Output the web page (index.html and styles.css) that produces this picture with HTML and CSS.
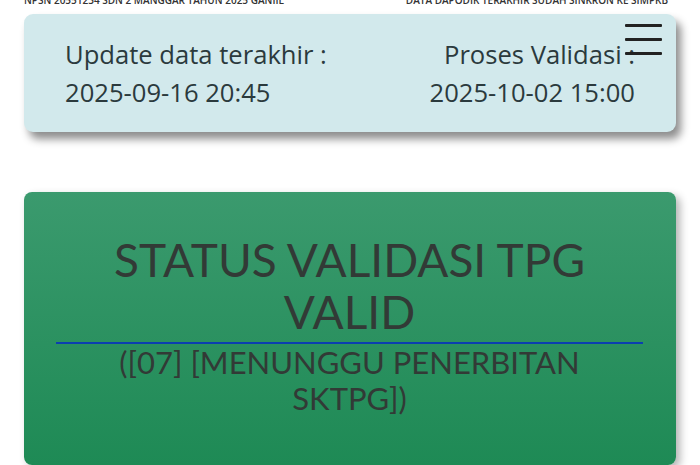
FILE: index.html
```html
<!DOCTYPE html>
<html>
<head>
<meta charset="utf-8">
<link rel="stylesheet" href="styles.css">
</head>
<body>
<div class="page">
  <div class="clip">
    <div class="clip-row">
      <span>NPSN 20551234 SDN 2 MANGGAR TAHUN 2025 GANJIL</span>
      <span>DATA DAPODIK TERAKHIR SUDAH SINKRON KE SIMPKB</span>
    </div>
  </div>
  <div class="info-card">
    <div class="info-col">
      <div>Update data terakhir :</div>
      <div>2025-09-16 20:45</div>
    </div>
    <div class="info-col right">
      <div>Proses Validasi :</div>
      <div>2025-10-02 15:00</div>
    </div>
    <div class="burger"><span></span><span></span><span></span></div>
  </div>
  <div class="status-card">
    <div class="status-title">STATUS VALIDASI TPG<br>VALID</div>
    <hr class="divider">
    <div class="status-sub">([07] [MENUNGGU PENERBITAN<br>SKTPG])</div>
  </div>
</div>
</body>
</html>
```

FILE: styles.css
```css
html, body {
  margin: 0;
  padding: 0;
  background: #ffffff;
}
body {
  width: 700px;
  height: 465px;
  overflow: hidden;
  font-family: "Open Sans", "Noto Sans", sans-serif;
}
.page {
  padding: 0 24px;
}
.clip {
  height: 4px;
  overflow: hidden;
  display: flex;
  align-items: flex-end;
}
.clip-row {
  display: flex;
  justify-content: space-between;
  width: 100%;
  padding: 0 8px 0 0;
  font-size: 10px;
  line-height: 10px;
  font-weight: 600;
  color: #333;
  margin-bottom: -1px;
}
.info-card {
  position: relative;
  margin-top: 10px;
  height: 118px;
  box-sizing: border-box;
  background: #d2e9ec;
  border-radius: 9px;
  box-shadow: 5px 7px 9px rgba(0,0,0,0.45);
  display: flex;
  justify-content: space-between;
  align-items: center;
  padding: 2px 41px 0 41px;
  color: #2b3a3d;
  font-size: 25.6px;
  line-height: 38px;
}
.info-col.right {
  text-align: right;
}
.burger {
  position: absolute;
  top: 10px;
  right: 14px;
  width: 37px;
  display: flex;
  flex-direction: column;
  gap: 11px;
}
.burger span {
  display: block;
  height: 3px;
  background: #222;
  border-radius: 1px;
}
.status-card {
  margin-top: 60px;
  height: 273px;
  background: linear-gradient(to bottom, #3b9a6e, #1e8a55);
  border-radius: 8px;
  box-shadow: 4px 4px 8px rgba(0,0,0,0.3);
  padding: 42px 33px 0 32px;
  box-sizing: border-box;
  text-align: center;
  color: #323a36;
  font-family: "Lato", "Open Sans", sans-serif;
}
.status-title {
  font-size: 46px;
  line-height: 52px;
  font-weight: 400;
}
.divider {
  border: none;
  height: 2px;
  background: #0b3fb0;
  margin: 4px 0 0 0;
}
.status-sub {
  font-size: 31px;
  line-height: 36px;
}
```
